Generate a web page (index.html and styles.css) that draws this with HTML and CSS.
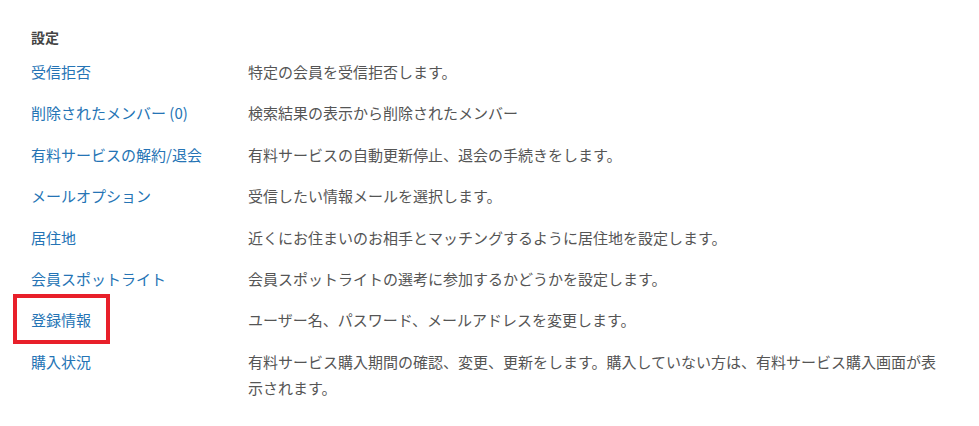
FILE: index.html
```html
<!DOCTYPE html>
<html lang="ja">
<head>
<meta charset="utf-8">
<title>設定</title>
<link rel="stylesheet" href="styles.css">
</head>
<body>
<section class="settings">
  <h2 class="settings-title">設定</h2>
  <div class="settings-list">
    <div class="row">
      <div class="row-label"><a class="link" href="#">受信拒否</a></div>
      <div class="row-desc">特定の会員を受信拒否します。</div>
    </div>
    <div class="row">
      <div class="row-label"><a class="link" href="#">削除されたメンバー (0)</a></div>
      <div class="row-desc">検索結果の表示から削除されたメンバー</div>
    </div>
    <div class="row">
      <div class="row-label"><a class="link" href="#">有料サービスの解約/退会</a></div>
      <div class="row-desc">有料サービスの自動更新停止、退会の手続きをします。</div>
    </div>
    <div class="row">
      <div class="row-label"><a class="link" href="#">メールオプション</a></div>
      <div class="row-desc">受信したい情報メールを選択します。</div>
    </div>
    <div class="row">
      <div class="row-label"><a class="link" href="#">居住地</a></div>
      <div class="row-desc">近くにお住まいのお相手とマッチングするように居住地を設定します。</div>
    </div>
    <div class="row">
      <div class="row-label"><a class="link" href="#">会員スポットライト</a></div>
      <div class="row-desc">会員スポットライトの選考に参加するかどうかを設定します。</div>
    </div>
    <div class="row">
      <div class="row-label"><a class="link link-highlight" href="#">登録情報</a></div>
      <div class="row-desc">ユーザー名、パスワード、メールアドレスを変更します。</div>
    </div>
    <div class="row">
      <div class="row-label"><a class="link" href="#">購入状況</a></div>
      <div class="row-desc">有料サービス購入期間の確認、変更、更新をします。購入していない方は、有料サービス購入画面が表示されます。</div>
    </div>
  </div>
</section>
</body>
</html>
```

FILE: styles.css
```css
html, body {
  margin: 0;
  padding: 0;
  background: #ffffff;
}

body {
  font-family: "Noto Sans CJK JP", "Noto Sans", sans-serif;
  font-size: 15px;
  color: #555555;
}

.settings {
  padding: 27px 36px 0 31px;
}

.settings-title {
  margin: 0 0 12px;
  font-size: 14px;
  line-height: 20px;
  font-weight: 700;
  color: #444444;
}

.settings-list {
  display: flex;
  flex-direction: column;
  gap: 15.4px;
}

.row {
  display: flex;
  line-height: 26px;
}

.row-label {
  flex: 0 0 217px;
}

.row-desc {
  flex: 1;
  color: #555555;
}

.link {
  color: #2574b5;
  text-decoration: none;
}

.link-highlight {
  position: relative;
  display: inline-block;
}

.link-highlight::after {
  content: "";
  position: absolute;
  top: -13px;
  bottom: -11px;
  left: -18px;
  right: -19px;
  border: 4px solid #e8202a;
}
```
